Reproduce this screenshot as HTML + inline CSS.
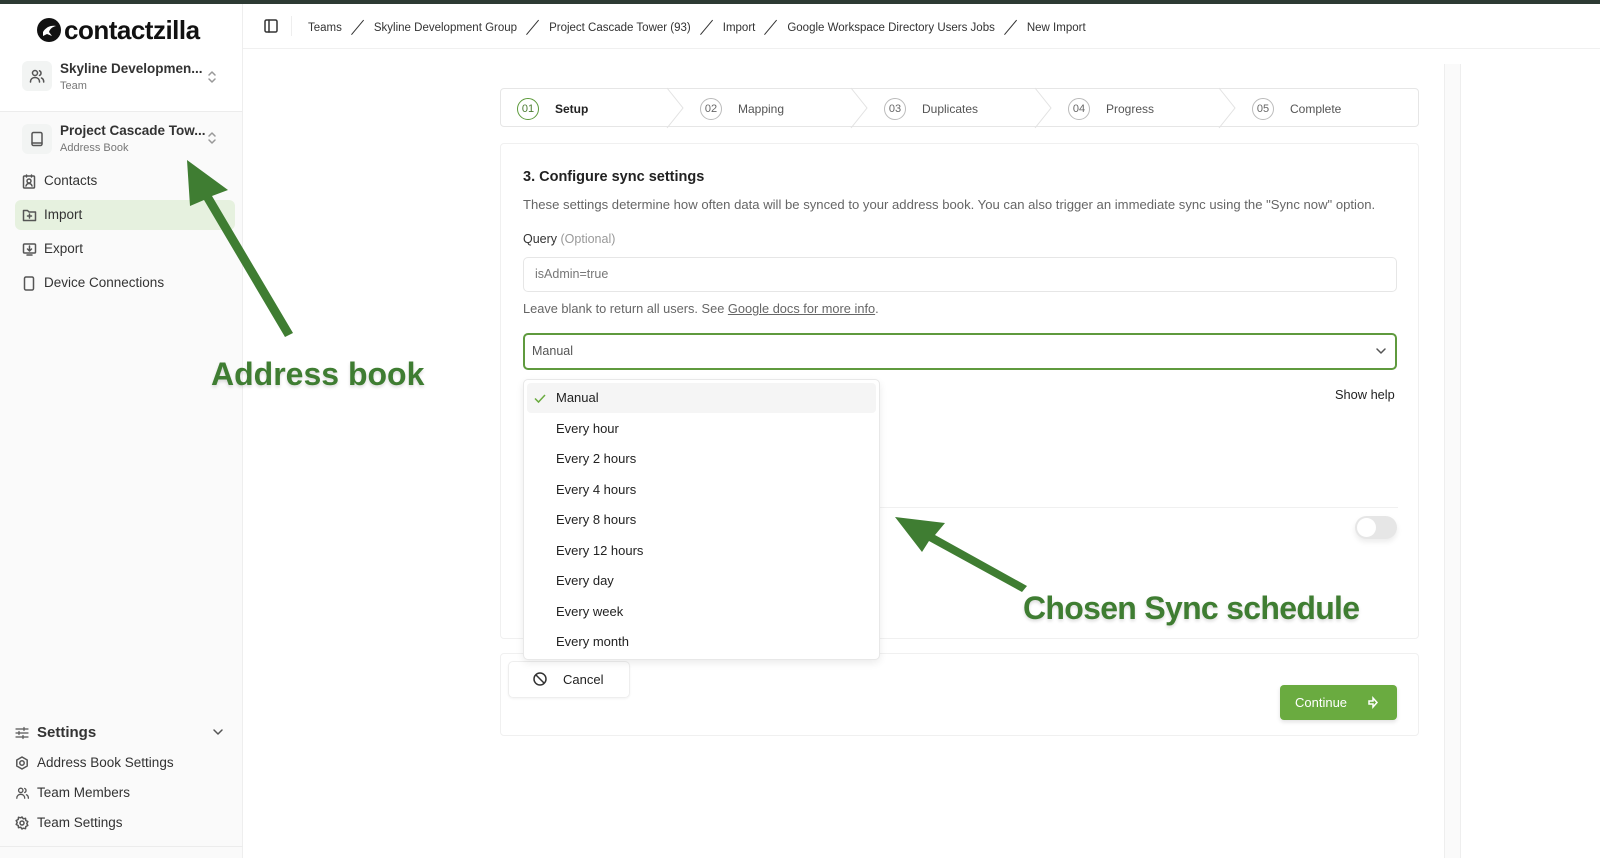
<!DOCTYPE html>
<html><head><meta charset="utf-8"><style>
*{box-sizing:border-box;margin:0;padding:0}
body{width:1600px;height:858px;overflow:hidden;background:#fff;font-family:"Liberation Sans",sans-serif;color:#222;position:relative}
.a{position:absolute}
.t{position:absolute;white-space:nowrap}
svg{position:absolute;overflow:visible}
.ic{stroke:#555;fill:none;stroke-width:1.5;stroke-linecap:round;stroke-linejoin:round}
.nav{font-size:13.5px;color:#333}
.opt{position:absolute;left:32px;font-size:13px;color:#222}
.step{position:absolute;top:0;height:39px;display:flex;align-items:center;font-size:12px;color:#555}
.circ{width:22px;height:22px;border:1.5px solid #bbb;border-radius:50%;font-size:11px;display:flex;align-items:center;justify-content:center;margin-right:16px;color:#666}
.sl{display:inline-block;width:16px;height:16px;margin:0 8px;vertical-align:-4px;position:relative}
.sl:after{content:"";position:absolute;left:7px;top:-1px;width:1.4px;height:19px;background:#333;transform:rotate(40deg)}
</style></head><body>
<div class="a" style="left:0;top:0;width:1600px;height:4px;background:#2d3a33"></div>
<!-- sidebar -->
<div class="a" style="left:0;top:4px;width:243px;height:854px;background:#fafafa;border-right:1px solid #eee"></div>
<div class="a" style="left:0;top:4px;width:243px;height:108px;background:#fff;border-bottom:1px solid #ececec;border-right:1px solid #eee"></div>
<svg style="left:36px;top:17px" width="26" height="26" viewBox="0 0 26 26"><circle cx="13" cy="13" r="12" fill="#111"/><path d="M7 15c3-5 8-7 13-6-4 1-6 3-7 6l3 4-5-2-4 2z" fill="#fff"/></svg>
<div class="t" style="left:64px;top:15px;font-size:26px;font-weight:bold;color:#111;letter-spacing:-0.5px">contactzilla</div>
<div class="a" style="left:22px;top:61px;width:30px;height:30px;background:#f2f4f3;border-radius:6px"></div>
<svg style="left:29px;top:68px" width="16" height="16" class="ic" viewBox="0 0 16 16"><circle cx="6" cy="5" r="2.5"/><path d="M1.5 14c0-3 2-4.5 4.5-4.5s4.5 1.5 4.5 4.5M10.5 2.8a2.5 2.5 0 010 4.6M12.5 10c1.5.6 2.2 2 2.2 4"/></svg>
<div class="t" style="left:60px;top:61px;font-size:13.5px;font-weight:bold;color:#333">Skyline Developmen...</div>
<div class="t" style="left:60px;top:80px;font-size:11px;color:#777">Team</div>
<svg style="left:207px;top:70px" width="10" height="14" class="ic" viewBox="0 0 10 14"><path d="M2 5l3-3 3 3M2 9l3 3 3-3" stroke="#999"/></svg>
<div class="a" style="left:22px;top:124px;width:30px;height:30px;background:#f2f4f3;border-radius:6px"></div>
<svg style="left:30px;top:131px" width="14" height="16" class="ic" viewBox="0 0 14 16"><rect x="2" y="1.5" width="10" height="13" rx="1.5"/><path d="M2 12h10"/></svg>
<div class="t" style="left:60px;top:123px;font-size:13.5px;font-weight:bold;color:#333">Project Cascade Tow...</div>
<div class="t" style="left:60px;top:142px;font-size:11px;color:#777">Address Book</div>
<svg style="left:207px;top:131px" width="10" height="14" class="ic" viewBox="0 0 10 14"><path d="M2 5l3-3 3 3M2 9l3 3 3-3" stroke="#999"/></svg>
<div class="a" style="left:15px;top:200px;width:220px;height:30px;background:#e6f1df;border-radius:6px"></div>
<svg style="left:22px;top:174px" width="14" height="15" class="ic" viewBox="0 0 14 15"><rect x="1.5" y="2" width="11" height="12" rx="1"/><circle cx="7" cy="7" r="2"/><path d="M4 12c.5-2 1.5-2.5 3-2.5s2.5.5 3 2.5M4.5 1v2M9.5 1v2"/></svg>
<div class="t nav" style="left:44px;top:173px">Contacts</div>
<svg style="left:22px;top:208px" width="15" height="14" class="ic" viewBox="0 0 15 14"><path d="M1.5 2.5h4l1.5 1.5h6.5v8.5h-12z M7.5 6v4M5.5 8h4"/></svg>
<div class="t nav" style="left:44px;top:207px">Import</div>
<svg style="left:22px;top:242px" width="15" height="14" class="ic" viewBox="0 0 15 14"><rect x="1.5" y="2" width="12" height="9" rx="1"/><path d="M7.5 4v5M5.5 7l2 2 2-2M5 13h5"/></svg>
<div class="t nav" style="left:44px;top:241px">Export</div>
<svg style="left:23px;top:276px" width="12" height="15" class="ic" viewBox="0 0 12 15"><rect x="1.5" y="1" width="9" height="13" rx="1.5"/></svg>
<div class="t nav" style="left:44px;top:275px">Device Connections</div>
<svg style="left:15px;top:727px" width="14" height="12" class="ic" viewBox="0 0 14 12"><path d="M1 2h12M1 6h12M1 10h12" stroke-width="1.2"/><path d="M9 0.5v3M4 4.5v3M8 8.5v3" stroke-width="1.2"/></svg>
<div class="t" style="left:37px;top:724px;font-size:15px;font-weight:bold;color:#333">Settings</div>
<svg style="left:213px;top:729px" width="10" height="7" class="ic" viewBox="0 0 10 7"><path d="M1 1l4 4 4-4"/></svg>
<svg style="left:15px;top:756px" width="14" height="14" class="ic" viewBox="0 0 14 14"><path d="M7 1l5.2 3v6L7 13l-5.2-3V4z"/><circle cx="7" cy="7" r="2.2"/></svg>
<div class="t nav" style="left:37px;top:755px">Address Book Settings</div>
<svg style="left:15px;top:786px" width="15" height="14" class="ic" viewBox="0 0 16 16"><circle cx="6" cy="5" r="2.5"/><path d="M1.5 14c0-3 2-4.5 4.5-4.5s4.5 1.5 4.5 4.5M10.5 2.8a2.5 2.5 0 010 4.6M12.5 10c1.5.6 2.2 2 2.2 4"/></svg>
<div class="t nav" style="left:37px;top:785px">Team Members</div>
<svg style="left:15px;top:816px" width="14" height="14" class="ic" viewBox="0 0 14 14"><circle cx="7" cy="7" r="2"/><path d="M7 1l1.3 1.8 2.2-.5.3 2.2 2 1-1 2 1 2-2 1-.3 2.2-2.2-.5L7 13l-1.3-1.8-2.2.5-.3-2.2-2-1 1-2-1-2 2-1 .3-2.2 2.2.5z"/></svg>
<div class="t nav" style="left:37px;top:815px">Team Settings</div>
<div class="a" style="left:0;top:846px;width:243px;height:1px;background:#ececec"></div>
<!-- topbar -->
<div class="a" style="left:243px;top:48px;width:1357px;height:1px;background:#f0f0f0"></div>
<svg style="left:264px;top:19px" width="14" height="14" class="ic" viewBox="0 0 14 14"><rect x="1" y="1" width="12" height="12" rx="1.5" stroke="#333"/><path d="M5 1v12" stroke="#333"/></svg>
<div class="a" style="left:291px;top:16px;width:1px;height:20px;background:#eee"></div>
<div class="t" style="left:308px;top:19px;font-size:11.5px;color:#333">Teams<span class="sl"></span>Skyline Development Group<span class="sl"></span>Project Cascade Tower (93)<span class="sl"></span>Import<span class="sl"></span>Google Workspace Directory Users Jobs<span class="sl"></span>New Import</div>
<!-- right strip -->
<div class="a" style="left:1444px;top:64px;width:17px;height:794px;background:#fafafa;border-left:1px solid #eee;border-right:1px solid #eee"></div>
<!-- stepper -->
<div class="a" style="left:500px;top:88px;width:919px;height:39px;border:1px solid #e6e6e6;border-radius:4px">
<div class="step" style="left:16px;color:#222;font-weight:bold"><div class="circ" style="border-color:#5c9a3a;color:#4a7a30;font-weight:normal">01</div>Setup</div>
<div class="step" style="left:199px"><div class="circ">02</div>Mapping</div>
<div class="step" style="left:383px"><div class="circ">03</div>Duplicates</div>
<div class="step" style="left:567px"><div class="circ">04</div>Progress</div>
<div class="step" style="left:751px"><div class="circ">05</div>Complete</div>
<svg style="left:166px;top:-1px" width="760" height="40" viewBox="0 0 760 40" fill="none" stroke="#e2e2e2"><path d="M0 0l16 20-16 20M184 0l16 20-16 20M368 0l16 20-16 20M552 0l16 20-16 20"/></svg>
</div>
<!-- card -->
<div class="a" style="left:500px;top:143px;width:919px;height:496px;border:1px solid #f0f0f0;border-radius:4px"></div>
<div class="t" style="left:523px;top:169px;font-size:14.5px;font-weight:bold;color:#222">3. Configure sync settings</div>
<div class="t" style="left:523px;top:197px;font-size:13.1px;color:#666">These settings determine how often data will be synced to your address book. You can also trigger an immediate sync using the "Sync now" option.</div>
<div class="t" style="left:523px;top:232px;font-size:12.5px;color:#333">Query <span style="color:#999">(Optional)</span></div>
<div class="a" style="left:523px;top:257px;width:874px;height:35px;border:1px solid #e6e6e6;border-radius:5px"></div>
<div class="t" style="left:535px;top:267px;font-size:12.5px;color:#777">isAdmin=true</div>
<div class="t" style="left:523px;top:301px;font-size:12.8px;color:#666">Leave blank to return all users. See <span style="text-decoration:underline">Google docs for more info</span>.</div>
<div class="a" style="left:523px;top:333px;width:874px;height:37px;border:2px solid #5f9a3e;border-radius:5px"></div>
<div class="t" style="left:532px;top:344px;font-size:12.5px;color:#555">Manual</div>
<svg style="left:1376px;top:348px" width="10" height="7" class="ic" viewBox="0 0 10 7"><path d="M1 1l4 4 4-4"/></svg>
<div class="t" style="left:1335px;top:387px;font-size:12.8px;color:#222">Show help</div>
<div class="a" style="left:880px;top:507px;width:518px;height:1px;background:#f0f0f0"></div>
<div class="a" style="left:1355px;top:516px;width:42px;height:23px;background:#e6e6e6;border-radius:12px;box-shadow:0 3px 6px rgba(0,0,0,.08)"></div>
<div class="a" style="left:1357px;top:518px;width:19px;height:19px;background:#fff;border-radius:50%"></div>
<!-- bottom card -->
<div class="a" style="left:500px;top:653px;width:919px;height:83px;border:1px solid #f0f0f0;border-radius:4px"></div>
<div class="a" style="left:508px;top:661px;width:122px;height:37px;border:1px solid #eee;border-radius:5px;box-shadow:0 1px 2px rgba(0,0,0,.05)"></div>
<svg style="left:533px;top:672px" width="14" height="14" class="ic" viewBox="0 0 14 14"><circle cx="7" cy="7" r="6" stroke="#333"/><path d="M3 3l8 8" stroke="#333"/></svg>
<div class="t" style="left:563px;top:672px;font-size:13px;color:#222">Cancel</div>
<div class="a" style="left:1280px;top:685px;width:117px;height:35px;background:#6aab40;border-radius:4px;box-shadow:0 2px 4px rgba(0,0,0,.12)"></div>
<div class="t" style="left:1295px;top:695px;font-size:13px;color:#fff">Continue</div>
<svg style="left:1368px;top:697px" width="10" height="11" viewBox="0 0 10 11" fill="none" stroke="#fff" stroke-width="1.5"><path d="M1 4h4V1l4 4.5-4 4.5V7H1z"/></svg>
<!-- dropdown -->
<div class="a" style="left:523px;top:379px;width:357px;height:281px;background:#fff;border:1px solid #e8e8e8;border-radius:5px;box-shadow:0 3px 8px rgba(0,0,0,.08)">
<div class="a" style="left:3px;top:3px;width:349px;height:30px;background:#f5f5f5;border-radius:4px"></div>
<svg style="left:10px;top:14px" width="12" height="9" viewBox="0 0 12 9" fill="none" stroke="#6aab40" stroke-width="1.5"><path d="M1 4.5l3.5 3.5 6.5-7"/></svg>
<div class="opt" style="top:10px">Manual</div>
<div class="opt" style="top:41px">Every hour</div>
<div class="opt" style="top:71px">Every 2 hours</div>
<div class="opt" style="top:102px">Every 4 hours</div>
<div class="opt" style="top:132px">Every 8 hours</div>
<div class="opt" style="top:163px">Every 12 hours</div>
<div class="opt" style="top:193px">Every day</div>
<div class="opt" style="top:224px">Every week</div>
<div class="opt" style="top:254px">Every month</div>
</div>
<!-- annotations -->
<svg style="left:0;top:0" width="1600" height="858"><g fill="#3f7d32">
<polygon points="187,160 228,190 212,196 293,333 285,337 204,200 190,206"/>
<polygon points="895,517 945,523 935,535 1027,586 1022,592 929,541 922,552"/>
</g></svg>
<div class="t" style="left:211px;top:356px;font-size:32px;font-weight:bold;color:#3f7d32;text-shadow:0 2px 3px rgba(0,0,0,.15)">Address book</div>
<div class="t" style="left:1023px;top:590px;font-size:32px;font-weight:bold;color:#3f7d32;letter-spacing:-0.7px;text-shadow:0 2px 3px rgba(0,0,0,.15)">Chosen Sync schedule</div>
</body></html>
